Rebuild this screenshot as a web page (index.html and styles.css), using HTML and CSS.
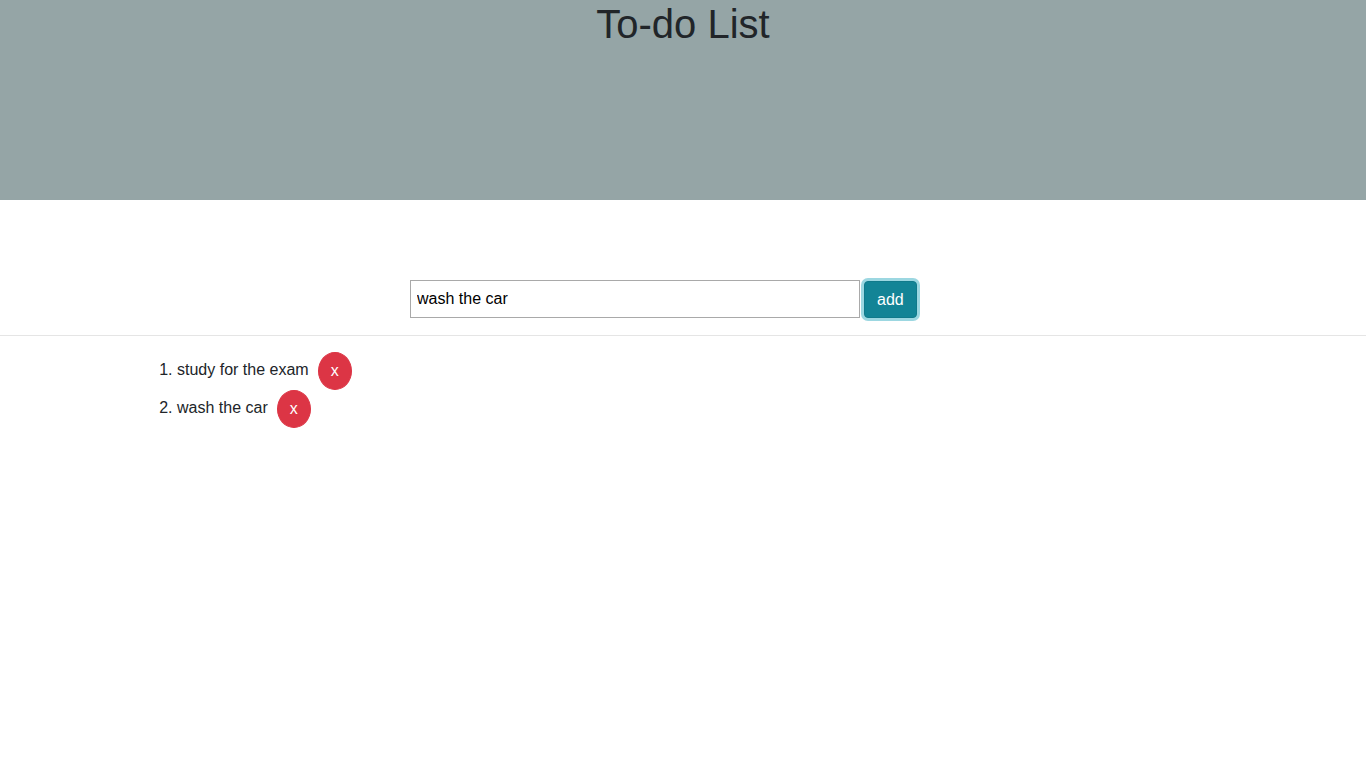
FILE: index.html
```html
<!DOCTYPE html>
<html lang="en">
<head>
<meta charset="utf-8">
<title>To-do List</title>
<link rel="stylesheet" href="styles.css">
</head>
<body>
<header class="banner">
  <h1 class="title">To-do List</h1>
</header>
<main>
  <form class="add-form">
    <input class="todo-input" type="text" value="wash the car">
    <button class="btn btn-add" type="button">add</button>
  </form>
  <hr class="divider">
  <ol class="todo-list">
    <li class="todo-item"><span class="todo-text">study for the exam</span><button class="btn btn-delete" type="button">x</button></li>
    <li class="todo-item"><span class="todo-text">wash the car</span><button class="btn btn-delete" type="button">x</button></li>
  </ol>
</main>
</body>
</html>
```
FILE: styles.css
```css
* { box-sizing: border-box; }
html, body {
  margin: 0;
  padding: 0;
  background: #fff;
  color: #212529;
  font-family: "Liberation Sans", Arial, sans-serif;
  font-size: 16px;
  line-height: 1.5;
}
.banner {
  height: 200px;
  background: #95a5a6;
  text-align: center;
}
.title {
  margin: 0;
  font-size: 40px;
  font-weight: 400;
  line-height: 1.2;
  color: #212529;
}
.add-form {
  display: flex;
  align-items: flex-end;
  gap: 4px;
  margin: 80px 0 0 410px;
}
.todo-input {
  width: 450px;
  height: 38px;
  border: 1px solid #a9a9a9;
  padding: 1px 6px;
  font-family: "Liberation Sans", Arial, sans-serif;
  font-size: 16px;
  color: #000;
  outline: none;
}
.btn {
  font-family: "Liberation Sans", Arial, sans-serif;
  font-size: 16px;
  line-height: 1.5;
  padding: 6px 12px;
  border: 1px solid transparent;
  color: #fff;
  cursor: pointer;
}
.btn-add {
  height: 37px;
  padding-top: 5px;
  padding-bottom: 5px;
  background: #138496;
  border-color: #117a8b;
  border-radius: 4px;
  box-shadow: 0 0 0 3px rgba(58, 176, 195, 0.5);
}
.divider {
  margin: 17px 0 16px;
  border: 0;
  border-top: 1px solid rgba(0, 0, 0, 0.1);
}
.todo-list {
  margin: 0;
  padding-left: 177px;
}
.todo-item {
  height: 38px;
  display: list-item;
}
.btn-delete {
  margin-left: 9px;
  width: 34px;
  height: 38px;
  padding: 6px 0;
  background: #dc3545;
  border-color: #dc3545;
  border-radius: 50%;
  vertical-align: middle;
}
```
